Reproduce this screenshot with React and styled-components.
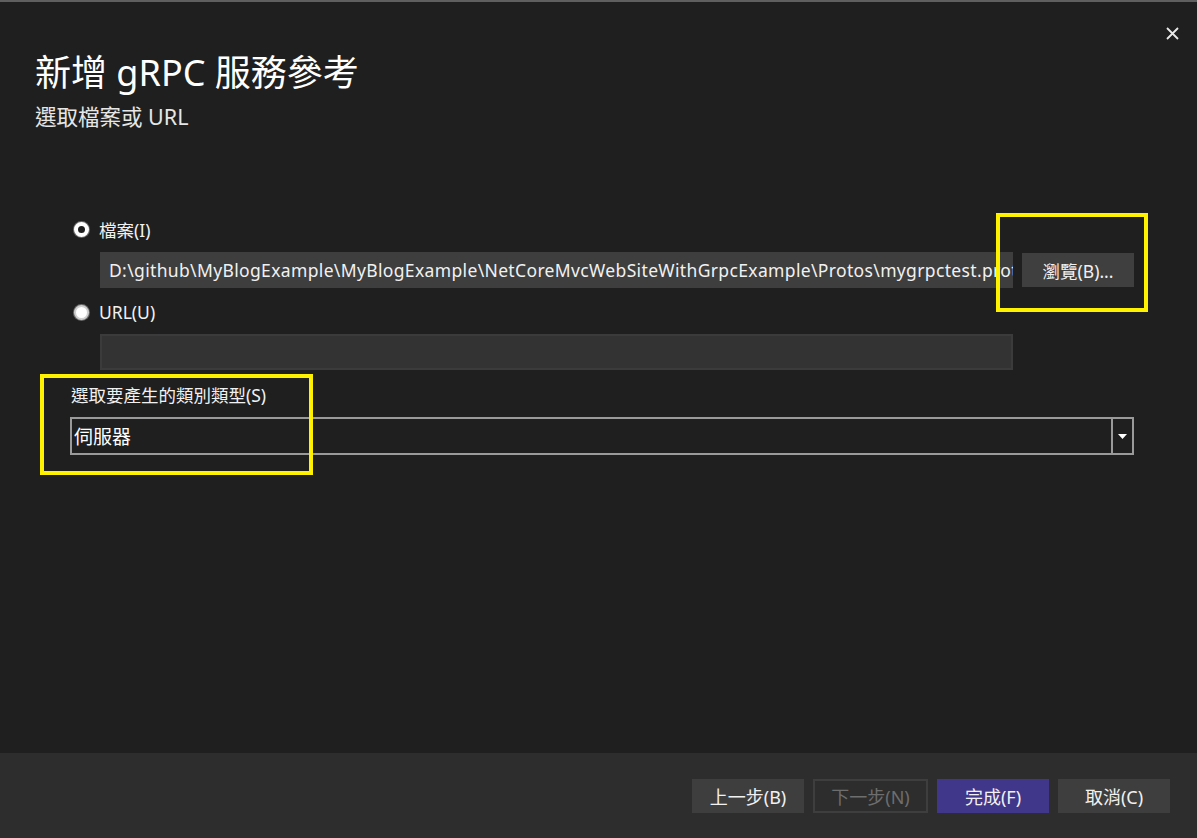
import React from 'react';
import styled, { createGlobalStyle } from 'styled-components';

const Global = createGlobalStyle`
  html, body { margin: 0; padding: 0; background: #1f1f1f; }
  body { font-family: "Noto Sans", "Noto Sans CJK TC", sans-serif; }
`;

const Dialog = styled.div`
  position: relative;
  width: 1197px;
  height: 838px;
  box-sizing: border-box;
  border-top: 2px solid #5f5f5f;
  background: #1f1f1f;
  color: #f1f1f1;
  display: flex;
  flex-direction: column;
  font-family: "Noto Sans", "Noto Sans CJK TC", sans-serif;
`;

const CloseButton = styled.button`
  position: absolute;
  top: 22px;
  right: 16px;
  width: 18px;
  height: 18px;
  padding: 0;
  border: none;
  background: transparent;
  display: flex;
  align-items: center;
  justify-content: center;
`;

const Body = styled.div`
  flex: 1;
  position: relative;
  padding: 46px 0 0 35px;
`;

const Title = styled.h1`
  margin: 0;
  font-size: 36px;
  font-weight: 400;
  line-height: 50px;
  color: #ffffff;
`;

const Subtitle = styled.div`
  margin-top: 4px;
  font-size: 21.5px;
  line-height: 30px;
  color: #e6e6e6;
`;

const Form = styled.div`
  margin-top: 84px;
  margin-left: 39px;
  width: 1060px;
  display: flex;
  flex-direction: column;
`;

const RadioRow = styled.label`
  display: flex;
  align-items: center;
  gap: 10px;
  height: 26px;
  margin-top: ${p => p.gapTop || '0'};
  font-size: 17.5px;
  color: #f1f1f1;
`;

const Radio = styled.span`
  width: 15px;
  height: 15px;
  border-radius: 50%;
  box-sizing: border-box;
  background: ${p => (p.checked ? '#1f1f1f' : '#ffffff')};
  border: ${p => (p.checked ? '4px solid #ffffff' : '2px solid #cfcfcf')};
  box-shadow: 0 0 0 1px #6a6a6a;
`;

const FieldRow = styled.div`
  display: flex;
  align-items: center;
  gap: 9px;
  margin-top: ${p => p.gapTop || '0'};
  padding-left: 26px;
`;

const PathBox = styled.div`
  width: 913px;
  height: 36px;
  box-sizing: border-box;
  background: ${p => (p.empty ? '#333333' : '#3e3e3e')};
  border: ${p => (p.empty ? '2px solid #3b3b3b' : 'none')};
  padding: 0 9px;
  display: flex;
  align-items: center;
  overflow: hidden;
  white-space: nowrap;
  font-size: 17.5px;
  letter-spacing: 0.35px;
  color: #f1f1f1;
`;

const BrowseButton = styled.button`
  width: 112px;
  height: 34px;
  border: none;
  background: #3f3f3f;
  color: #f1f1f1;
  font-family: inherit;
  font-size: 17.5px;
  padding: 0;
`;

const FieldLabel = styled.div`
  margin: 12px 0 0 -3px;
  font-size: 17.5px;
  line-height: 26px;
  color: #f1f1f1;
`;

const Combo = styled.div`
  margin: 9px 0 0 -4px;
  width: 1064px;
  height: 38px;
  flex-shrink: 0;
  box-sizing: border-box;
  border: 2px solid #9a9a9a;
  display: flex;
  align-items: stretch;
  font-size: 19px;
`;

const ComboValue = styled.div`
  flex: 1;
  display: flex;
  align-items: center;
  padding-left: 2px;
  color: #ffffff;
`;

const ComboArrow = styled.div`
  width: 19px;
  border-left: 2px solid #9a9a9a;
  display: flex;
  align-items: center;
  justify-content: center;
`;

const Highlight = styled.div`
  position: absolute;
  box-sizing: border-box;
  border: 4px solid #fff200;
  pointer-events: none;
`;

const Footer = styled.div`
  height: 85px;
  flex-shrink: 0;
  background: #2d2d2d;
  display: flex;
  align-items: center;
  justify-content: flex-end;
  gap: 9px;
  padding-right: 27px;
`;

const FooterButton = styled.button`
  width: ${p => (p.variant === 'disabled' ? '115px' : '112px')};
  height: 34px;
  box-sizing: border-box;
  border: ${p => (p.variant === 'disabled' ? '2px solid #3e3e3e' : 'none')};
  background: ${p =>
    p.variant === 'primary' ? '#41378a' : p.variant === 'disabled' ? '#2d2d2d' : '#3e3e3e'};
  color: ${p => (p.variant === 'disabled' ? '#6e6e6e' : '#f1f1f1')};
  font-family: inherit;
  font-size: 18px;
  padding: 0;
`;

export default function App() {
  return (
    <>
      <Global />
      <Dialog>
        <CloseButton aria-label="close">
          <svg width="13" height="13" viewBox="0 0 13 13">
            <path d="M1 1L12 12M12 1L1 12" stroke="#e8e8e8" strokeWidth="1.8" />
          </svg>
        </CloseButton>
        <Body>
          <Title>新增 gRPC 服務參考</Title>
          <Subtitle>選取檔案或 URL</Subtitle>
          <Form>
            <RadioRow>
              <Radio checked />
              檔案(I)
            </RadioRow>
            <FieldRow gapTop="10px">
              <PathBox>
                D:\github\MyBlogExample\MyBlogExample\NetCoreMvcWebSiteWithGrpcExample\Protos\mygrpctest.proto
              </PathBox>
              <BrowseButton>瀏覽(B)...</BrowseButton>
            </FieldRow>
            <RadioRow gapTop="11px">
              <Radio />
              URL(U)
            </RadioRow>
            <FieldRow gapTop="9px">
              <PathBox empty />
            </FieldRow>
            <FieldLabel>選取要產生的類別類型(S)</FieldLabel>
            <Combo>
              <ComboValue>伺服器</ComboValue>
              <ComboArrow>
                <svg width="9" height="5" viewBox="0 0 9 5">
                  <path d="M0 0H9L4.5 5Z" fill="#ffffff" />
                </svg>
              </ComboArrow>
            </Combo>
          </Form>
          <Highlight style={{ left: 996, top: 211, width: 152, height: 99 }} />
          <Highlight style={{ left: 40, top: 372, width: 273, height: 101 }} />
        </Body>
        <Footer>
          <FooterButton>上一步(B)</FooterButton>
          <FooterButton variant="disabled">下一步(N)</FooterButton>
          <FooterButton variant="primary">完成(F)</FooterButton>
          <FooterButton>取消(C)</FooterButton>
        </Footer>
      </Dialog>
    </>
  );
}
